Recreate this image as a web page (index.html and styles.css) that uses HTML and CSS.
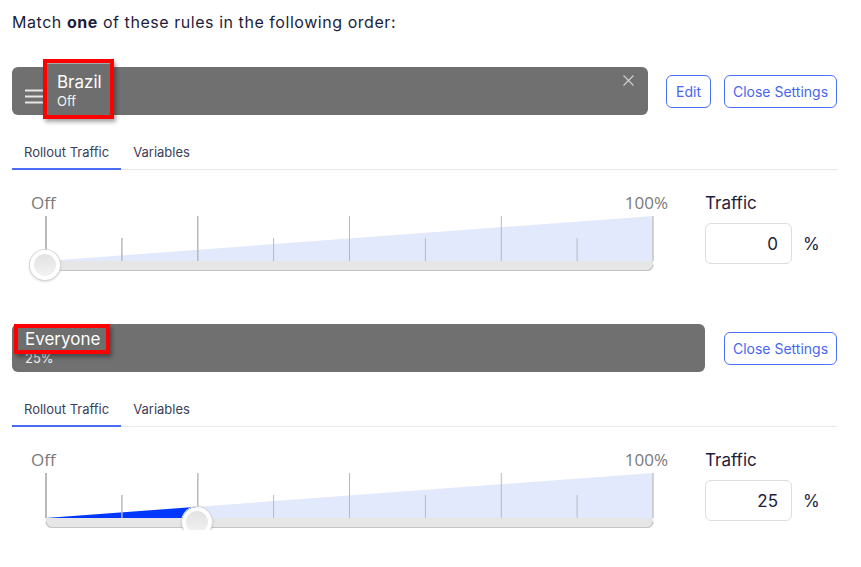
FILE: index.html
```html
<!DOCTYPE html>
<html lang="en">
<head>
<meta charset="utf-8">
<title>Rules</title>
<link rel="stylesheet" href="styles.css">
</head>
<body>
<p class="intro">Match <b>one</b> of these rules in the following order:</p>

<section class="rule">
  <div class="rule-head">
    <div class="rule-bar">
      <svg class="handle" width="18" height="15" viewBox="0 0 18 15"><path d="M0 1.5h18M0 7.5h18M0 13.5h18" stroke="#e6e6e6" stroke-width="2"/></svg>
      <div class="rule-title boxed">
        <span class="rule-name">Brazil</span>
        <span class="rule-status">Off</span>
      </div>
      <svg class="remove" width="11" height="11" viewBox="0 0 11 11"><path d="M0.5 0.5l10 10M10.5 0.5l-10 10" stroke="#d2d2d2" stroke-width="1.1"/></svg>
      <div class="highlight hl-brazil"></div>
    </div>
    <div class="actions">
      <button class="btn btn-edit">Edit</button>
      <button class="btn btn-close">Close Settings</button>
    </div>
  </div>
  <div class="tabs">
    <span class="tab active">Rollout Traffic</span>
    <span class="tab">Variables</span>
  </div>
  <div class="rollout">
    <div class="slider">
      <div class="slider-labels"><span>Off</span><span>100%</span></div>
      <div class="slider-graph">
        <svg width="637" height="60" viewBox="0 0 637 60">
          <polygon points="15,48 622,3 622,48" fill="#e3e9fd"/>
          <path d="M15 48H622V51.5A6 6 0 0 1 616 57.5H21A6 6 0 0 1 15 51.5Z" fill="#e6e6e6"/>
          <path d="M15 51.5A6 6 0 0 0 21 57.5H616A6 6 0 0 0 622 51.5" fill="none" stroke="#c4c4c4" stroke-width="1.2"/>
          <g stroke="#b9b9b9">
            <line x1="15" y1="3" x2="15" y2="48" stroke-width="2"/>
            <line x1="90.9" y1="25" x2="90.9" y2="48" stroke-width="1.5"/>
            <line x1="166.8" y1="3" x2="166.8" y2="48" stroke-width="1.5"/>
            <line x1="242.6" y1="25" x2="242.6" y2="48" stroke-width="1"/>
            <line x1="318.5" y1="3" x2="318.5" y2="48" stroke-width="1"/>
            <line x1="394.4" y1="25" x2="394.4" y2="48" stroke-width="1"/>
            <line x1="470.3" y1="3" x2="470.3" y2="48" stroke-width="1"/>
            <line x1="546.1" y1="25" x2="546.1" y2="48" stroke-width="1"/>
            <line x1="622" y1="3" x2="622" y2="48" stroke-width="1.2"/>
          </g>
        </svg>
        <span class="thumb" style="left: -1px"></span>
      </div>
    </div>
    <div class="traffic">
      <label class="traffic-label">Traffic</label>
      <div class="traffic-row">
        <input class="traffic-input" type="text" value="0">
        <span class="pct">%</span>
      </div>
    </div>
  </div>
</section>

<section class="rule">
  <div class="rule-head">
    <div class="rule-bar plain">
      <div class="rule-title">
        <span class="rule-name">Everyone</span>
        <span class="rule-status">25%</span>
      </div>
      <div class="highlight hl-everyone"></div>
    </div>
    <div class="actions">
      <button class="btn btn-close">Close Settings</button>
    </div>
  </div>
  <div class="tabs">
    <span class="tab active">Rollout Traffic</span>
    <span class="tab">Variables</span>
  </div>
  <div class="rollout">
    <div class="slider">
      <div class="slider-labels"><span>Off</span><span>100%</span></div>
      <div class="slider-graph">
        <svg width="637" height="60" viewBox="0 0 637 60">
          <polygon points="15,48 622,3 622,48" fill="#e3e9fd"/>
          <polygon points="15,48 166.8,36.75 166.8,48" fill="#0037ff"/>
          <path d="M15 48H622V51.5A6 6 0 0 1 616 57.5H21A6 6 0 0 1 15 51.5Z" fill="#e6e6e6"/>
          <path d="M15 51.5A6 6 0 0 0 21 57.5H616A6 6 0 0 0 622 51.5" fill="none" stroke="#c4c4c4" stroke-width="1.2"/>
          <g stroke="#b9b9b9">
            <line x1="15" y1="3" x2="15" y2="48" stroke-width="2"/>
            <line x1="90.9" y1="25" x2="90.9" y2="48" stroke-width="1.5"/>
            <line x1="166.8" y1="3" x2="166.8" y2="48" stroke-width="1.5"/>
            <line x1="242.6" y1="25" x2="242.6" y2="48" stroke-width="1"/>
            <line x1="318.5" y1="3" x2="318.5" y2="48" stroke-width="1"/>
            <line x1="394.4" y1="25" x2="394.4" y2="48" stroke-width="1"/>
            <line x1="470.3" y1="3" x2="470.3" y2="48" stroke-width="1"/>
            <line x1="546.1" y1="25" x2="546.1" y2="48" stroke-width="1"/>
            <line x1="622" y1="3" x2="622" y2="48" stroke-width="1.2"/>
          </g>
        </svg>
        <span class="thumb" style="left: 150.8px"></span>
      </div>
    </div>
    <div class="traffic">
      <label class="traffic-label">Traffic</label>
      <div class="traffic-row">
        <input class="traffic-input" type="text" value="25">
        <span class="pct">%</span>
      </div>
    </div>
  </div>
</section>
</body>
</html>
```

FILE: styles.css
```css
* { box-sizing: border-box; }

html, body {
  margin: 0;
  background: #ffffff;
}

body {
  padding: 12px 24px 0 12px;
  font-family: Inter, "Liberation Sans", sans-serif;
  color: #1d1d3b;
}

.intro {
  margin: 0;
  font-size: 16px;
  line-height: 20px;
  letter-spacing: 0.55px;
}

.intro b { font-weight: 700; }

.rule {
  padding-top: 35px;
}

.rule + .rule {
  padding-top: 51px;
}

.rule-head {
  display: flex;
  align-items: center;
}

.rule-bar {
  position: relative;
  flex: 1;
  height: 48px;
  margin-right: 18px;
  background: #707070;
  border-radius: 6px;
  display: flex;
  align-items: flex-start;
  padding: 5px 14px 0 13px;
}

.rule-bar.plain {
  padding-left: 13px;
  margin-right: 19px;
}

.handle {
  flex: none;
  margin: 17px 14px 0 0;
}

.rule-title {
  position: relative;
  display: flex;
  flex-direction: column;
  flex: 1;
  color: #ffffff;
}

.rule-name {
  position: relative;
  z-index: 2;
  font-size: 17px;
  line-height: 20px;
}

.rule-status {
  margin-top: 2px;
  font-size: 13px;
  line-height: 15px;
  color: #f4f4f4;
}

.rule-title.boxed .rule-status {
  position: relative;
  z-index: 2;
}

.remove {
  flex: none;
  margin-top: 3px;
}

.highlight {
  position: absolute;
  z-index: 1;
  border: 4px solid #ff0000;
  background: #6e6e6e;
  box-shadow: 2px 3px 4px rgba(0, 0, 0, 0.35);
}

.hl-brazil {
  left: 31px;
  top: -8px;
  width: 71px;
  height: 60px;
  box-shadow: inset 0 4px 0 -3px #a8a8a8, 2px 3px 4px rgba(0, 0, 0, 0.35);
}

.hl-everyone {
  left: 2px;
  top: 0;
  width: 96px;
  height: 30px;
}

.actions {
  display: flex;
  gap: 13px;
}

.btn {
  height: 33px;
  padding: 0;
  border: 1px solid #4b70f5;
  border-radius: 6px;
  background: #ffffff;
  color: #4766f0;
  font-family: Inter, "Liberation Sans", sans-serif;
  font-size: 14px;
  text-align: center;
}

.btn-edit { width: 45px; }

.btn-close { width: 113px; }

.tabs {
  display: flex;
  margin-top: 29px;
  border-bottom: 1px solid #e9e9e9;
}

.tab {
  padding: 0 12px 8px;
  font-size: 13px;
  line-height: 16px;
  color: #3b4056;
}

.tab.active {
  border-bottom: 2px solid #4a6cf5;
  margin-bottom: -1px;
}

.tab:not(.active) { padding-bottom: 9px; }

.rollout {
  display: flex;
  padding-top: 23px;
}

.slider {
  width: 637px;
  margin-left: 19px;
}

.slider-labels {
  display: flex;
  justify-content: space-between;
  font-family: "Open Sans", "Noto Sans", sans-serif;
  font-size: 17px;
  line-height: 20px;
  color: #7a7a7a;
}

.slider-graph {
  position: relative;
  height: 60px;
}

.slider-graph svg { display: block; }

.thumb {
  position: absolute;
  top: 37px;
  width: 30px;
  height: 30px;
  border-radius: 50%;
  border: 4px solid #ffffff;
  background: linear-gradient(#e2e2e2, #f2f2f2);
  box-shadow: 0 0 0 1px #d8d8d8, 0 1px 3px rgba(0, 0, 0, 0.3);
}

.traffic {
  margin-left: 37px;
}

.traffic-label {
  display: block;
  font-size: 17px;
  line-height: 20px;
  color: #1d1d3b;
}

.traffic-row {
  display: flex;
  align-items: center;
  margin-top: 10px;
}

.traffic-input {
  width: 87px;
  height: 41px;
  border: 1px solid #dddddd;
  border-radius: 6px;
  padding: 0 13px 0 0;
  text-align: right;
  font-family: Inter, "Liberation Sans", sans-serif;
  font-size: 17px;
  color: #1d1d3b;
  outline: none;
}

.pct {
  margin-left: 11px;
  font-size: 17px;
  color: #1d1d3b;
}
```
